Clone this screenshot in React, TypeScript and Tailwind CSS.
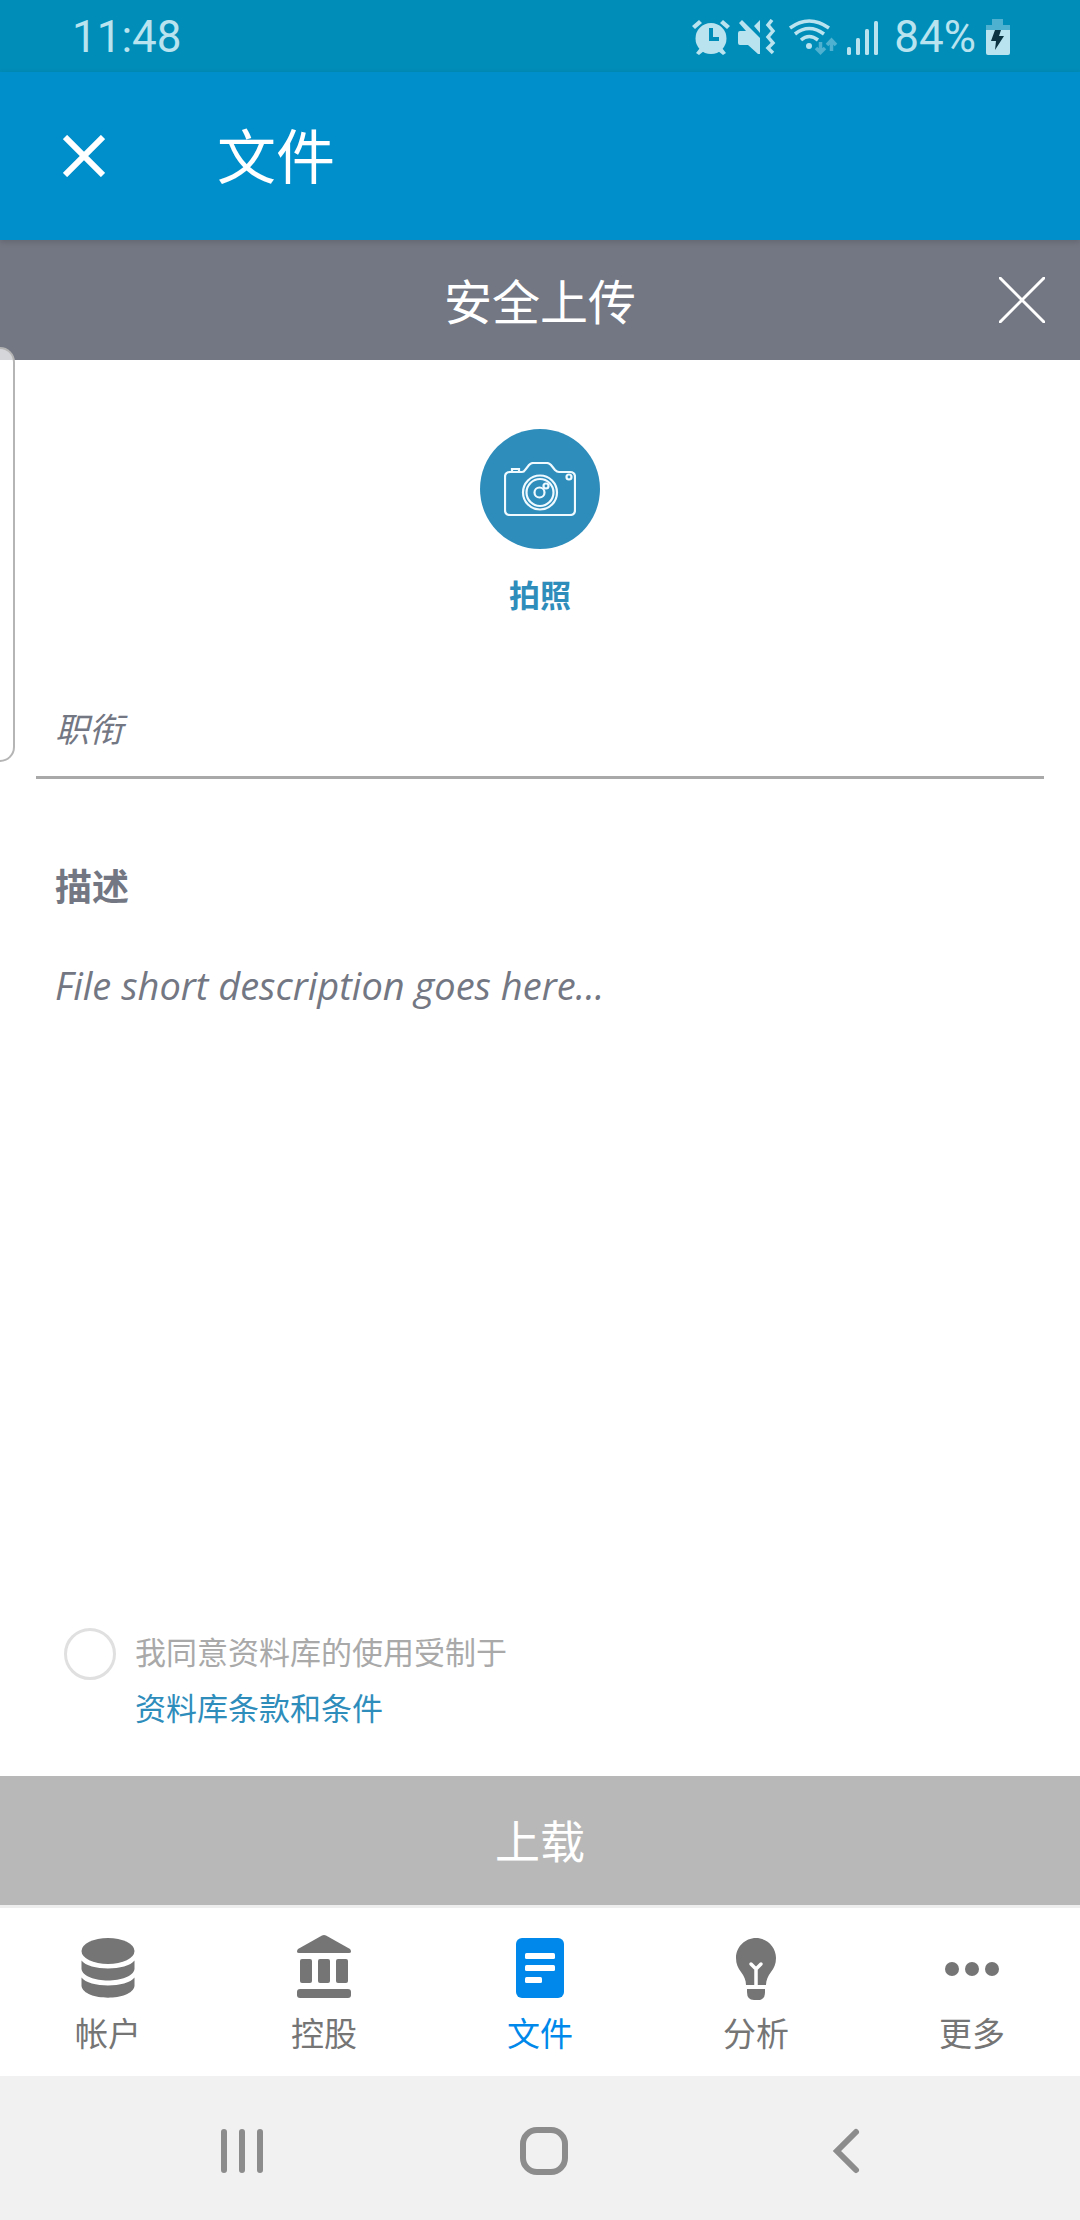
import React from "react";

function StatusBar() {
  return (
    <div className="flex h-[72px] shrink-0 items-center justify-between bg-[#008db8] pt-0.5 pr-[70px] pl-[72px] font-['Roboto',sans-serif] text-[44px] leading-[52px] text-[#b8e3ef]">
      <span>11:48</span>
      <div className="flex items-center">
        <svg className="h-9 w-[155px] shrink-0" viewBox="0 0 155 36" fill="currentColor" aria-hidden="true">
          <path fillRule="evenodd" d="M19 4a15.500 15.500 0 1 0 0 31a15.500 15.500 0 0 0 0-31zM17 9h4v9h6v4H17z" />
          <path d="M0 7L7 1l3 3L3 10zM38 7L31 1l-3 3l7 6zM8 29l-4 5l3 2l5-4zM30 29l4 5l-3 2l-5-4z" />
          <path d="M46 14q0-2 2-2h6L47 4l3-3l18 18v16h-2L56 26H48q-2 0-2-2zM62 7l6-6v13z" />
          <path d="M80 1l-4 5l5 6l-5 6l5 6l-5 5l5 5" fill="none" stroke="currentColor" strokeWidth="3.500" />
          <path d="M98 9Q117-5 137 9M103 15Q117 4 132 15M109 21Q117 14 126 21" fill="none" stroke="currentColor" strokeWidth="3.500" />
          <circle cx="117" cy="27" r="3" />
          <path d="M128.500 23v10M124 29l4.500 4.500l4.500-4.500M139.500 32V21M135 26l4.500-5l4.500 5" fill="none" stroke="#4db1cf" strokeWidth="3.500" />
        </svg>
        <svg className="h-9 w-[31px] shrink-0" viewBox="0 0 31 36" fill="currentColor" aria-hidden="true">
          <rect y="28" width="4" height="8" rx="1.500" />
          <rect x="9" y="19" width="4" height="17" rx="1.500" />
          <rect x="18" y="10" width="4" height="26" rx="1.500" />
          <rect x="27" y="2" width="4" height="34" rx="1.500" />
        </svg>
        <span className="ml-4">84%</span>
        <svg className="ml-2.5 h-9 w-6" viewBox="0 0 24 36" aria-hidden="true">
          <path d="M0 6h6V0h11v6h7v6H0z" fill="#4db1cf" />
          <path d="M0 11h24v23q0 2-2 2H2q-2 0-2-2z" fill="#b8e3ef" />
          <path d="M9 11h6l-2 6h5L9 31l1-9H5z" fill="#0b3341" />
        </svg>
      </div>
    </div>
  );
}

function AppBar() {
  return (
    <header className="relative z-10 flex h-[168px] shrink-0 items-center gap-[112px] bg-[#008fcb] pl-[63px] text-white shadow-[0_2px_6px_rgba(0,0,0,0.15)]">
      <button type="button" aria-label="关闭">
        <svg className="size-[42px]" viewBox="0 0 42 42" fill="none" stroke="currentColor" strokeWidth="6" aria-hidden="true">
          <path d="M2 2L40 40M40 2L2 40" />
        </svg>
      </button>
      <h1 className="text-[59px] leading-[84px]">文件</h1>
    </header>
  );
}

function UploadHeader() {
  return (
    <div className="relative flex h-[120px] shrink-0 items-center justify-center bg-[#737783] text-white">
      <h2 className="pt-1 text-5xl leading-[68px]">安全上传</h2>
      <button type="button" aria-label="关闭上传" className="absolute right-[35px]">
        <svg className="size-[46px]" viewBox="0 0 46 46" fill="none" stroke="currentColor" strokeWidth="3" aria-hidden="true">
          <path d="M1 1L45 45M45 1L1 45" strokeLinecap="round" />
        </svg>
      </button>
    </div>
  );
}

function CameraIcon() {
  return (
    <svg className="h-[54px] w-[72px]" viewBox="0 0 72 54" fill="none" stroke="#eefaff" strokeWidth="2.200" aria-hidden="true">
      <path d="M6 10H18Q20 10 21 8L25 3Q27 1 29 1H43Q45 1 47 3L51 8Q53 10 55 10H66Q71 10 71 15V48Q71 53 66 53H6Q1 53 1 48V15Q1 10 6 10z" />
      <path d="M8 10V7H15V10" />
      <circle cx="36" cy="30.500" r="17" />
      <circle cx="36" cy="30.500" r="13.500" />
      <circle cx="35.500" cy="30.500" r="5" />
      <circle cx="42" cy="24" r="2.500" />
      <circle cx="65" cy="15" r="2.500" />
    </svg>
  );
}

function AccountsIcon() {
  return (
    <svg className="h-[60px] w-[54px]" viewBox="0 0 54 60" fill="currentColor" aria-hidden="true">
      <ellipse cx="27" cy="13" rx="26.500" ry="13" />
      <path d="M.5 22.500C8 33 46 33 53.500 22.500V31C51 46.300 3 46.300 .5 31z" />
      <path d="M.5 39.500C8 50 46 50 53.500 39.500V48C51 63.500 3 63.500 .5 48z" />
    </svg>
  );
}

function HoldingsIcon() {
  return (
    <svg className="h-[63px] w-[54px]" viewBox="0 0 54 63" fill="currentColor" aria-hidden="true">
      <path d="M25 .5Q27-.5 29 .5L53 14Q54 15 54 16.500Q54 18 52 18H2Q0 18 0 16.500Q0 15 1 14z" />
      <rect x="3" y="24" width="12" height="24" rx="2" />
      <rect x="21" y="24" width="12" height="24" rx="2" />
      <rect x="39" y="24" width="12" height="24" rx="2" />
      <rect y="54" width="54" height="9" rx="3" />
    </svg>
  );
}

function FilesIcon() {
  return (
    <svg className="h-[60px] w-12" viewBox="0 0 48 60" aria-hidden="true">
      <rect width="48" height="60" rx="6" fill="currentColor" />
      <g fill="white">
        <rect x="9" y="15" width="30" height="6" rx="1.500" />
        <rect x="9" y="27" width="30" height="6" rx="1.500" />
        <rect x="9" y="39" width="17" height="6" rx="1.500" />
      </g>
    </svg>
  );
}

function AnalysisIcon() {
  return (
    <svg className="h-[60px] w-10 overflow-visible" viewBox="0 0 40 60" aria-hidden="true">
      <path d="M20 0C9 0 0 9 0 20C0 26 2 30 5 34C8 38 10 42 10 47H30C30 42 32 38 35 34C38 30 40 26 40 20C40 9 31 0 20 0z" fill="currentColor" />
      <path d="M11 51H29V54Q29 62 22 62H18Q11 62 11 54z" fill="currentColor" />
      <path d="M20 48V31M15 26L20 31L25 26" fill="none" stroke="white" strokeWidth="3.500" strokeLinecap="round" />
    </svg>
  );
}

function MoreIcon() {
  return (
    <svg className="h-[60px] w-14" viewBox="0 0 56 60" fill="currentColor" aria-hidden="true">
      <circle cx="8" cy="31" r="7" />
      <circle cx="28" cy="31" r="7" />
      <circle cx="48" cy="31" r="7" />
    </svg>
  );
}

const tabs = [
  { label: "帐户", Icon: AccountsIcon, active: false },
  { label: "控股", Icon: HoldingsIcon, active: false },
  { label: "文件", Icon: FilesIcon, active: true },
  { label: "分析", Icon: AnalysisIcon, active: false },
  { label: "更多", Icon: MoreIcon, active: false },
];

function TabBar() {
  return (
    <nav className="grid h-[171px] shrink-0 grid-cols-5 border-t-3 border-[#eeeeee] bg-white">
      {tabs.map(({ label, Icon, active }) => (
        <button
          key={label}
          type="button"
          aria-current={active ? "page" : undefined}
          className={
            active
              ? "flex flex-col items-center gap-2 pt-6 text-[#0089ea]"
              : "flex flex-col items-center gap-2 pt-6 text-[#757575]"
          }
        >
          <span className="flex h-[66px] items-end">
            <Icon />
          </span>
          <span className="text-[33px] leading-[56px]">{label}</span>
        </button>
      ))}
    </nav>
  );
}

function SystemNav() {
  return (
    <div className="flex h-36 shrink-0 items-center justify-between bg-[#f1f1f1] pt-1.5 pr-[210px] pl-[218px] text-[#8c8c8c]">
      <button type="button" aria-label="最近">
        <svg className="size-12" viewBox="0 0 48 48" fill="none" stroke="currentColor" strokeWidth="6" strokeLinecap="round" aria-hidden="true">
          <path d="M6 5V43M24 5V43M42 5V43" />
        </svg>
      </button>
      <button type="button" aria-label="主页">
        <svg className="size-12" viewBox="0 0 48 48" fill="none" stroke="currentColor" strokeWidth="6" aria-hidden="true">
          <rect x="3" y="3" width="42" height="42" rx="14" />
        </svg>
      </button>
      <button type="button" aria-label="返回">
        <svg className="size-12" viewBox="0 0 48 48" fill="none" stroke="currentColor" strokeWidth="6" strokeLinecap="round" aria-hidden="true">
          <path d="M34 5L15 24L34 43" />
        </svg>
      </button>
    </div>
  );
}

export default function App() {
  return (
    <div
      lang="zh-CN"
      className="relative flex min-h-screen flex-col bg-white font-['Open_Sans','Noto_Sans_CJK_SC',sans-serif]"
    >
      <StatusBar />
      <AppBar />
      <UploadHeader />

      <main className="flex grow flex-col">
        <button type="button" className="mt-[69px] flex flex-col items-center gap-[18px] self-center text-[#2f8dbc]">
          <span className="flex size-[120px] items-center justify-center rounded-full bg-[#2f8dbc]">
            <CameraIcon />
          </span>
          <span className="text-[31px] leading-[56px] font-bold">拍照</span>
        </button>

        <div className="mx-9 mt-[81px] border-b-3 border-[#a9a9a9]">
          <input
            type="text"
            aria-label="职衔"
            placeholder="职衔"
            className="h-[72px] w-full px-[19px] pb-[22px] text-[34px] italic outline-none placeholder:text-[#737783] placeholder:opacity-100"
          />
        </div>

        <div className="mt-20 flex grow flex-col px-[55px] text-[#737783]">
          <label htmlFor="description" className="text-[37px] leading-[56px] font-bold">
            描述
          </label>
          <textarea
            id="description"
            placeholder="File short description goes here..."
            className="mt-[42px] grow resize-none text-[38px] leading-[56px] italic outline-none placeholder:text-[#737783] placeholder:opacity-100"
          />
        </div>

        <div className="flex gap-[19px] pt-6 pb-10 pl-16 text-[31px] leading-[56px]">
          <input
            id="agree"
            type="checkbox"
            className="mt-1 size-[52px] shrink-0 appearance-none rounded-full border-3 border-[#e0e0e0]"
          />
          <div>
            <label htmlFor="agree" className="block text-[#a9a9a9]">
              我同意资料库的使用受制于
            </label>
            <a href="#terms" className="block text-[#2f8dbc]">
              资料库条款和条件
            </a>
          </div>
        </div>
      </main>

      <button type="button" className="h-[129px] shrink-0 bg-[#b8b8b8] pt-0.5 text-[45px] leading-[64px] text-white">
        上载
      </button>
      <TabBar />
      <SystemNav />

      <div className="absolute top-[347px] left-0 z-20 h-[415px] w-[15px] rounded-r-[20px] border-2 border-l-0 border-[#b5b5b5] bg-white/70" />
    </div>
  );
}
